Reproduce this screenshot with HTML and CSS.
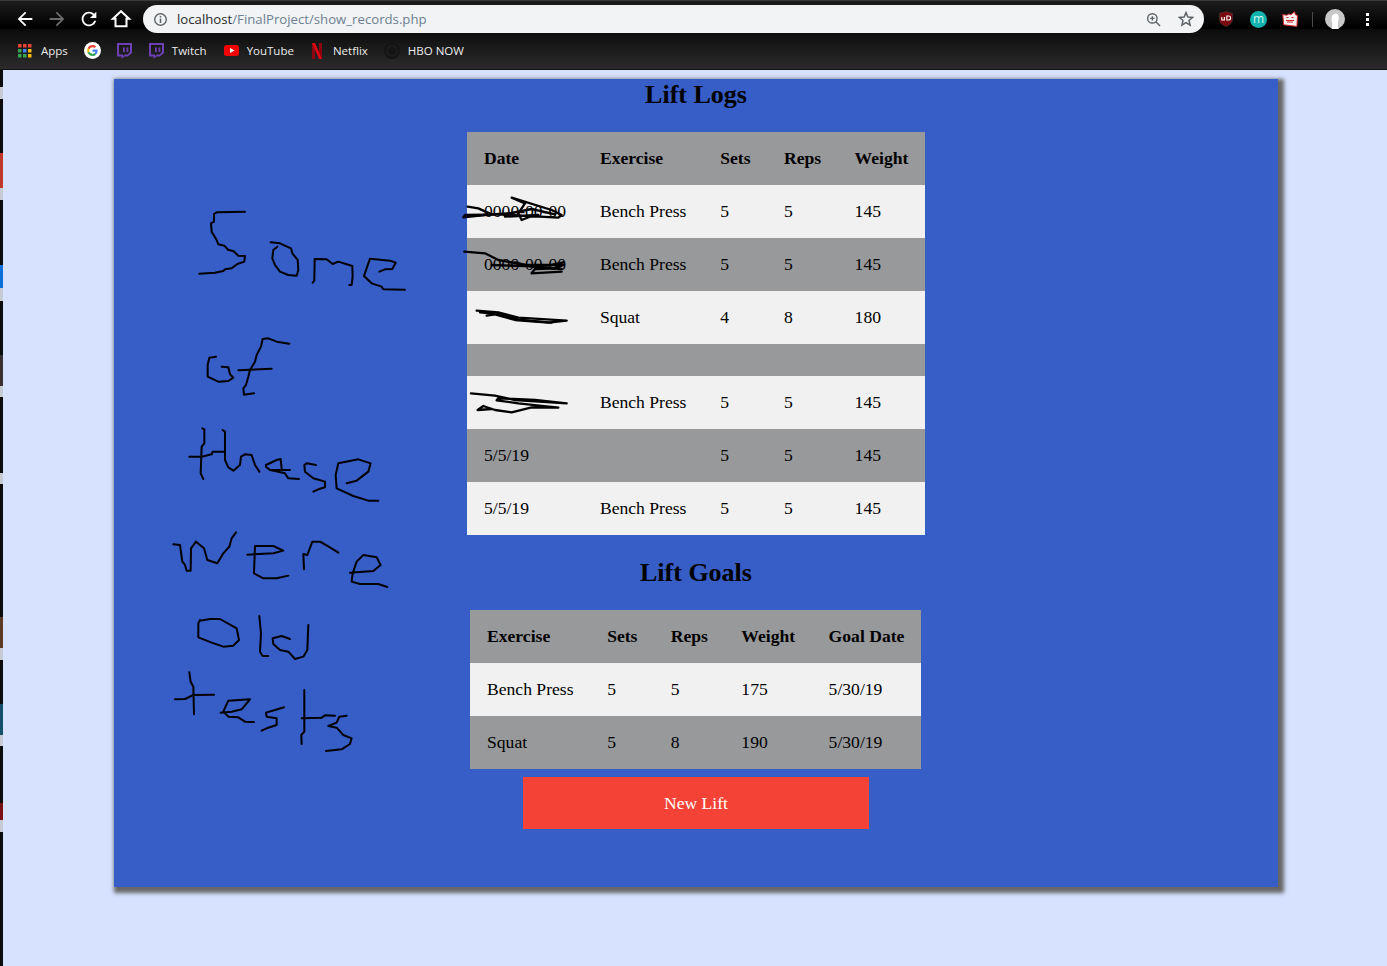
FILE: index.html
```html
<!DOCTYPE html>
<html lang="en">
<head>
<meta charset="utf-8">
<title>Lift Logs</title>
<link rel="stylesheet" href="styles.css">
</head>
<body>
<header class="chrome">
  <div class="toolbar">
    <div class="nav">
      <span class="slot"><svg class="ico" viewBox="0 0 24 24"><path class="w" d="M20 11H7.830l5.590-5.590L12 4l-8 8 8 8 1.410-1.410L7.830 13H20v-2z"/></svg></span>
      <span class="slot"><svg class="ico" viewBox="0 0 24 24"><path class="g" d="M20 11H7.830l5.590-5.590L12 4l-8 8 8 8 1.410-1.410L7.830 13H20v-2z" transform="rotate(180 12 12)"/></svg></span>
      <span class="slot"><svg class="ico" viewBox="0 0 24 24"><path class="w" d="M17.650 6.350A7.950 7.950 0 0 0 12 4c-4.420 0-7.990 3.580-7.990 8s3.570 8 7.990 8c3.730 0 6.840-2.550 7.730-6h-2.080A5.990 5.990 0 0 1 12 18c-3.310 0-6-2.690-6-6s2.690-6 6-6c1.660 0 3.140.69 4.220 1.780L13 11h7V4l-2.350 2.350z"/></svg></span>
      <span class="slot"><svg class="ico" viewBox="0 0 24 24"><path class="home" d="M12 3.500L3.200 11.600H6V20h12v-8.400h2.800z"/></svg></span>
    </div>
    <div class="omnibox">
      <svg class="info" viewBox="0 0 16 16"><circle class="line" cx="8" cy="8" r="6.200"/><path class="fillg" d="M7.200 7h1.600v4.600H7.200zM7.200 4.300h1.600v1.600H7.200z"/></svg>
      <span class="url"><span class="host">localhost</span>/FinalProject/show_records.php</span>
      <svg class="lens" viewBox="0 0 16 16"><circle class="line" cx="6.800" cy="6.800" r="5"/><path class="line" d="M10.500 10.500L15 15M4.500 6.800h4.600M6.800 4.500v4.600"/></svg>
      <svg class="star" viewBox="0 0 16 16"><path class="line" d="M8 1.600l1.900 4.400 4.700.4-3.600 3.100 1.100 4.700L8 11.700l-4.100 2.500L5 9.500 1.400 6.400l4.700-.4z"/></svg>
    </div>
    <div class="exts">
      <svg class="ext" viewBox="0 0 16 16"><path class="ub" d="M8 .5l6.500 1.800V8c0 3.500-2.700 6-6.500 7.500C4.200 14 1.500 11.500 1.500 8V2.300z"/><path class="ubt" d="M3.800 6v3h2.600V6M8.800 5v4h1.800a2 2 0 0 0 0-4z"/></svg>
      <span class="m">m</span>
      <svg class="ext last" viewBox="0 0 16 16"><path class="cat" d="M.8 3.500l4 .7 2-1.200 2.300.6L12.500.8l1 3 2 .6-.6 11-13.300-1.600z"/><path class="catl" d="M4.500 6.500h2M9.500 6.500h2M4 9.500h8M6 9.500v2.500M8 9.500v2.500M10 9.500v2.500"/></svg>
      <span class="sep"></span>
      <svg class="avatar" viewBox="0 0 20 20"><circle class="av" cx="10" cy="10" r="10"/><path class="avf" d="M6.500 20c.8-2.500 1.200-5 .6-6.500C6 11 6 5 10.500 4.500c3.500 0 3.800 4.500 2.500 8-.5 2 0 5 .7 7.500z"/></svg>
      <span class="dots"><i></i><i></i><i></i></span>
    </div>
  </div>
  <nav class="bookmarks">
    <span class="bm bm-apps">
      <svg class="bi" viewBox="0 0 14 14">
        <path class="r" d="M0 0h3.500v3.500H0zM5 0h3.500v3.500H5zM10 0h3.500v3.500H10z"/>
        <path class="gr" d="M0 5h3.500v3.500H0zM0 10h3.500v3.500H0zM5 10h3.500v3.500H5z"/>
        <path class="bl" d="M5 5h3.500v3.500H5z"/>
        <path class="y" d="M10 5h3.500v3.500H10zM10 10h3.500v3.500H10z"/>
      </svg>Apps
    </span>
    <span class="bm bm-g">
      <svg class="gi" viewBox="0 0 48 48"><circle class="wf" cx="24" cy="24" r="24"/><g transform="translate(8.500 8.500) scale(.645)">
        <path class="gb" d="M46.500 24.500c0-1.600-.1-3.100-.4-4.500H24v9h12.700c-.5 2.900-2.200 5.400-4.700 7v6h7.600c4.400-4.100 6.900-10.100 6.900-17.500z"/>
        <path class="gg" d="M24 48c6.500 0 11.900-2.100 15.600-5.800L32 36.500c-2.100 1.400-4.800 2.200-8 2.200-6.200 0-11.400-4.200-13.300-9.800H3v5.900C6.800 42.300 14.800 48 24 48z"/>
        <path class="gy" d="M10.700 28.900a14.400 14.400 0 0 1 0-9.800v-5.900H3a24 24 0 0 0 0 21.600z"/>
        <path class="gr2" d="M24 9.500c3.500 0 6.700 1.200 9.100 3.600l6.800-6.800C35.900 2.500 30.500 0 24 0 14.800 0 6.800 5.700 3 13.200l7.700 5.900C12.600 13.500 17.800 9.500 24 9.500z"/>
      </g></svg>
    </span>
    <span class="bm bm-t1">
      <svg class="ti" viewBox="0 0 16 17"><path class="tw" fill-rule="evenodd" d="M1 1h15v10l-4 3.500H8.500L5.500 17v-2.500H1zM3 3v9.500h4v1.500l2-1.500h2.500L14 10V3z"/><path class="tw" d="M7 5.500h1.800v4.500H7zM10.500 5.500h1.800v4.500h-1.800z"/></svg>
    </span>
    <span class="bm bm-t2">
      <svg class="ti" viewBox="0 0 16 17"><path class="tw" fill-rule="evenodd" d="M1 1h15v10l-4 3.500H8.500L5.500 17v-2.500H1zM3 3v9.500h4v1.500l2-1.500h2.500L14 10V3z"/><path class="tw" d="M7 5.500h1.800v4.500H7zM10.500 5.500h1.800v4.500h-1.800z"/></svg>Twitch
    </span>
    <span class="bm bm-yt">
      <svg class="yi" viewBox="0 0 15 11"><rect class="ytb" width="15" height="11" rx="2.500"/><path class="wf" d="M6 3l4.500 2.500L6 8z"/></svg>YouTube
    </span>
    <span class="bm bm-nf">
      <svg class="ni" viewBox="0 0 10 16"><path class="nfd" d="M0 0h3v16H0zM7 0h3v16H7z"/><path class="nfr" d="M0 0h3l7 16H7z"/></svg>Netflix
    </span>
    <span class="bm bm-hbo">
      <svg class="hi" viewBox="0 0 16 16"><circle class="hb" cx="8" cy="8" r="8"/><circle class="hl" cx="8" cy="8" r="5"/></svg>HBO NOW
    </span>
  </nav>
</header>

<div class="stage">
  <div class="strip"></div>
  <main class="panel">
    <h2 class="title first">Lift Logs</h2>
    <table class="logs">
      <tr class="dark"><th>Date</th><th>Exercise</th><th>Sets</th><th>Reps</th><th>Weight</th></tr>
      <tr class="light"><td>0000-00-00</td><td>Bench Press</td><td>5</td><td>5</td><td>145</td></tr>
      <tr class="dark"><td>0000-00-00</td><td>Bench Press</td><td>5</td><td>5</td><td>145</td></tr>
      <tr class="light"><td></td><td>Squat</td><td>4</td><td>8</td><td>180</td></tr>
      <tr class="dark"><td></td><td></td><td></td><td></td><td></td></tr>
      <tr class="light"><td></td><td>Bench Press</td><td>5</td><td>5</td><td>145</td></tr>
      <tr class="dark"><td>5/5/19</td><td></td><td>5</td><td>5</td><td>145</td></tr>
      <tr class="light"><td>5/5/19</td><td>Bench Press</td><td>5</td><td>5</td><td>145</td></tr>
    </table>
    <h2 class="title">Lift Goals</h2>
    <table class="goals">
      <tr class="dark"><th>Exercise</th><th>Sets</th><th>Reps</th><th>Weight</th><th>Goal Date</th></tr>
      <tr class="light"><td>Bench Press</td><td>5</td><td>5</td><td>175</td><td>5/30/19</td></tr>
      <tr class="dark"><td>Squat</td><td>5</td><td>8</td><td>190</td><td>5/30/19</td></tr>
    </table>
    <button class="new-lift">New Lift</button>
  </main>
</div>

<svg class="scribbles" viewBox="0 0 1387 966" aria-hidden="true">
  <g class="ink" transform="translate(160 190) scale(.3333)">
    <path d="M255 65L170 67L162 72L162 95L153 100L155 125L170 150L175 163L193 167L205 180L220 183L235 197L255 198L253 215L232 222L215 235L195 238L190 243L165 248L118 251"/>
    <path d="M332 157L360 160L393 175L397 190L413 210L415 240L410 257L385 255L360 245L345 225L337 205L340 180L352 170"/>
    <path d="M458 278L463 272L464 207L500 208L518 222L535 215L577 228L578 260L575 285L568 285"/>
    <path d="M658 245L675 238L697 237L707 218L690 212L630 206L620 235L612 258L635 280L665 290L670 298L735 299"/>
    <path d="M168 500L148 503L143 525L143 560L175 575L205 573L220 563L210 553L205 532L185 530"/>
    <path d="M388 461L350 455L325 445L308 447L303 470L290 495L285 515L270 540L265 560L258 585L250 595L252 614L282 610"/>
    <path d="M235 541L335 536"/>
  </g>
  <g class="ink" transform="translate(160 410) scale(.3333)">
    <path d="M127 55L133 58L133 100L125 110L122 190L130 207"/>
    <path d="M88 140L125 140L155 133L158 125L190 125"/>
    <path d="M188 60L195 65L195 150L205 172L220 182L240 165L243 140L255 133L275 135L285 165L298 185"/>
    <path d="M390 180L330 180L318 170L318 165L350 150L362 147L365 175M330 180L355 185L375 190L385 205L417 207"/>
    <path d="M468 165L440 160L433 165L435 185L460 205L495 215L495 232L475 238L460 245"/>
    <path d="M560 220L590 212L625 185L632 160L595 148L535 160L527 195L530 235L580 258L625 272L655 272"/>
    <path d="M40 403L60 405L67 455L75 465L80 482L92 482L93 415L108 395L132 415L142 450L172 460L190 430L208 410L215 385L228 367"/>
    <path d="M262 434L340 430L370 422L340 408L285 408L282 490L310 505L350 505L385 497"/>
    <path d="M432 478L430 432L442 435L457 395L480 395L510 412L535 428"/>
    <path d="M570 488L640 483L662 465L650 442L610 435L590 455L578 490L575 515L600 522L655 522L682 531"/>
  </g>
  <g class="ink" transform="translate(160 600) scale(.3333)">
    <path d="M120 60L115 70L115 112L155 128L190 140L220 137L237 120L230 85L180 57L150 57L120 62"/>
    <path d="M298 48L303 100L300 155L308 168L325 168"/>
    <path d="M390 117L365 108L338 115L340 132L360 150L385 155L405 177L430 170L442 150L445 75"/>
    <path d="M88 217L92 245L100 260L102 343"/>
    <path d="M45 298L75 297L100 285L162 284"/>
    <path d="M182 338L215 335L245 328L270 298L205 302L190 335L205 350L235 352L255 365L282 366"/>
    <path d="M372 322L345 330L318 338L320 350L350 355L350 375L320 385L305 392"/>
    <path d="M433 270L433 395L424 405L425 432"/>
    <path d="M425 355L485 353L495 346L525 347"/>
    <path d="M560 347L538 350L530 368L505 378L530 383L550 405L575 415L570 432L545 448L498 453"/>
  </g>
  <g class="ink dense" transform="translate(455 185) scale(.3333)">
    <path d="M38 65L70 70L110 88L25 97L30 90L150 88L200 92L310 98L320 90L290 75L170 38L210 55L190 85L200 105L225 95L250 90L150 95"/>
    <path d="M60 92L170 84L230 72L300 88"/>
    <path d="M28 200L90 205L130 225L210 240L325 240L300 250L240 252L230 265L320 260"/>
    <path d="M110 240L240 244L290 240L325 232"/>
    <path d="M180 232L230 245L320 252"/>
  </g>
  <g class="ink dense" transform="translate(455 295) scale(.3333)">
    <path d="M65 47L130 52L190 68L335 77L280 83L180 75L120 58L95 62"/>
    <path d="M75 52L140 58L190 74L290 83"/>
    <path d="M48 295L120 302L180 315L335 325L240 315L130 310L125 316L190 325L310 338L230 337L170 352L120 345L85 333L68 345L110 342"/>
  </g>
</svg>
</body>
</html>
```
FILE: styles.css
```css
* { box-sizing: border-box; }
html, body { margin: 0; height: 966px; overflow: hidden; }
body {
  position: relative;
  display: flex;
  flex-direction: column;
  background: #d6e2ff;
  font-family: "Liberation Serif", serif;
  color: #000;
}

/* browser chrome */
.chrome {
  flex: none;
  height: 70px;
  background: linear-gradient(#3a3a3a 0, #3a3a3a 1px, #1d1d1d 1px, #000 27px, #000 29px, #0b0b0b 29px, #2b2b2b 69px, #141414 69px);
  font-family: "Open Sans", sans-serif;
}
.toolbar { display: flex; height: 33px; padding: 5px 0 0 9px; }
.nav { display: flex; height: 28px; }
.slot { width: 32px; height: 28px; display: flex; align-items: center; justify-content: center; }
.ico { width: 22px; height: 22px; }
.w { fill: #fff; }
.g { fill: #6b6b6b; }
.home { fill: none; stroke: #fff; stroke-width: 2.200; stroke-linejoin: miter; }
.omnibox {
  width: 1061px;
  height: 28px;
  margin-left: 6px;
  border-radius: 14px;
  background: #f1f3f4;
  display: flex;
  align-items: center;
  padding: 0 10px;
}
.info { width: 15px; height: 15px; flex: none; }
.line { fill: none; stroke: #5f6368; stroke-width: 1.500; }
.fillg { fill: #5f6368; }
.url { margin-left: 9px; font-size: 13.200px; color: #6d7f92; white-space: nowrap; flex: 1; }
.host { color: #2b2b2b; }
.lens { width: 15px; height: 15px; flex: none; margin-right: 17px; }
.star { width: 16px; height: 16px; flex: none; }
.exts { display: flex; align-items: center; height: 28px; padding-left: 14px; }
.ext { width: 16px; height: 16px; flex: none; margin-right: 16px; }
.ext.last { margin-right: 14px; }
.ub { fill: #7a0a0f; stroke: #444; stroke-width: .5; }
.ubt { fill: none; stroke: #fff; stroke-width: 1.100; }
.m {
  width: 17px; height: 17px; border-radius: 50%;
  margin-right: 15px;
  background: #10b3ad;
  color: #d8f4f2;
  font-size: 12px;
  line-height: 16px;
  text-align: center;
  flex: none;
}
.cat { fill: #f8eeee; stroke: #d0282c; stroke-width: 1; }
.catl { fill: none; stroke: #d0282c; stroke-width: 1; }
.sep { width: 1px; height: 15px; background: #4a4a4a; margin-right: 12px; flex: none; }
.avatar { width: 20px; height: 20px; flex: none; }
.av { fill: #c8c8c8; }
.avf { fill: #fff; }
.dots { display: flex; flex-direction: column; gap: 2px; margin-left: 21px; }
.dots i { display: block; width: 3px; height: 3px; background: #fff; }

.bookmarks {
  display: flex;
  align-items: center;
  height: 35px;
  color: #ececec;
  font-size: 11.500px;
  white-space: nowrap;
}
.bm { display: flex; align-items: center; flex: none; }
.bi { width: 14px; height: 14px; margin-right: 9px; }
.r { fill: #ea4335; } .gr { fill: #34a853; } .bl { fill: #4285f4; } .y { fill: #fbbc05; }
.bm-apps { margin-left: 18px; }
.bm-g { margin-left: 16px; }
.gi { width: 17px; height: 17px; display: block; }
.wf { fill: #fff; }
.gb { fill: #4285f4; } .gg { fill: #34a853; } .gy { fill: #fbbc05; } .gr2 { fill: #ea4335; }
.bm-t1 { margin-left: 15px; }
.bm-t2 { margin-left: 16px; }
.ti { width: 16px; height: 17px; margin-right: 8px; }
.tw { fill: #6c3fb5; }
.bm-t1 .ti { margin-right: 0; }
.bm-yt { margin-left: 17px; }
.yi { width: 15px; height: 11px; margin-right: 8px; }
.ytb { fill: #f40000; }
.bm-nf { margin-left: 18px; }
.ni { width: 10px; height: 16px; margin-right: 11px; }
.nfd { fill: #8a0510; }
.nfr { fill: #d80a14; }
.bm-hbo { margin-left: 16px; }
.hi { width: 16px; height: 16px; margin-right: 8px; }
.hb { fill: #141414; }
.hl { fill: none; stroke: #1f1f1f; stroke-width: 1.500; }

/* page */
.stage { flex: 1; display: flex; min-height: 0; }
.strip {
  width: 3px;
  flex: none;
  background: linear-gradient(#0c0c0c 0, #0c0c0c 17px, #c6ccd4 17px, #c6ccd4 29px, #0c0c0c 29px, #0c0c0c 83px,
    #c0392b 83px, #c0392b 118px, #c6ccd4 118px, #c6ccd4 130px, #0c0c0c 130px, #0c0c0c 195px,
    #0a6fd8 195px, #0a6fd8 218px, #c6ccd4 218px, #c6ccd4 231px, #0c0c0c 231px, #0c0c0c 285px,
    #3a3230 285px, #3a3230 316px, #c6ccd4 316px, #c6ccd4 327px, #0c0c0c 327px, #0c0c0c 403px,
    #c6ccd4 403px, #c6ccd4 414px, #0c0c0c 414px, #0c0c0c 547px,
    #5b3a26 547px, #5b3a26 578px, #c6ccd4 578px, #c6ccd4 590px, #0c0c0c 590px, #0c0c0c 634px,
    #14506a 634px, #14506a 665px, #c6ccd4 665px, #c6ccd4 676px, #0c0c0c 676px, #0c0c0c 733px,
    #7a0f14 733px, #7a0f14 750px, #c6ccd4 750px, #c6ccd4 762px, #0c0c0c 762px);
}
.panel {
  width: 1164px;
  height: 808px;
  margin: 9px 0 0 111px;
  display: flex;
  flex-direction: column;
  align-items: center;
  background: #375dc6;
  box-shadow: 3px 3px 4px 3px #666;
}
.title {
  margin: 23px 0 22px;
  font-size: 26px;
  line-height: 30px;
  font-weight: bold;
}
.title.first { margin: 0 0 22px; padding-top: 1px; }
table { border-collapse: collapse; font-size: 17.600px; line-height: 21px; }
th, td { padding: 16px 16px 16px 17px; text-align: left; white-space: nowrap; }
.dark { background: #98999b; }
.light { background: #f1f1f1; }
.logs { width: 458px; }
.goals { width: 451px; margin-right: 1px; }
.new-lift {
  width: 346px;
  height: 52px;
  margin-top: 8px;
  border: 0;
  padding: 0;
  background: #f44336;
  color: #fff;
  font: 17.600px "Liberation Serif", serif;
}

/* marker scribbles drawn on top of the screenshot */
.scribbles { position: absolute; left: 0; top: 0; width: 1387px; height: 966px; pointer-events: none; }
.ink path { fill: none; stroke: #000; stroke-width: 6; stroke-linecap: round; stroke-linejoin: round; }
.dense path { stroke-width: 7; }
```
